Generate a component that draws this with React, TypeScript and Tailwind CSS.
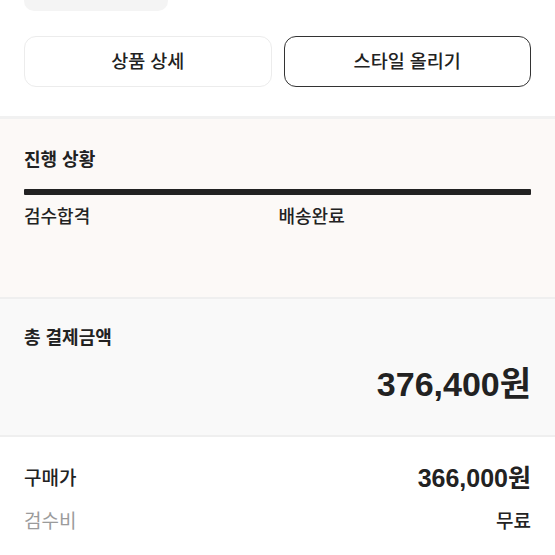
const font = { fontFamily: '"Liberation Sans", "Noto Sans CJK KR", sans-serif' };

export default function App() {
  return (
    <div className="w-[555px] h-[555px] overflow-hidden bg-white text-[#222]" style={font}>
      {/* top pill, cut off */}
      <div className="px-6">
        <div className="h-[11px] w-[144px] rounded-b-[10px] bg-[#f4f4f4]" />
      </div>

      {/* buttons */}
      <div className="grid grid-cols-2 gap-3 px-6 pt-[25px] pb-[29px]">
        <button className="h-[51px] rounded-[12px] border border-[#ececec] bg-white text-[18.5px] font-medium text-[#222]">
          상품 상세
        </button>
        <button className="h-[51px] rounded-[12px] border border-[#333] bg-white text-[18.5px] font-medium text-[#222]">
          스타일 올리기
        </button>
      </div>

      <div className="h-[3px] bg-[#f1f1f1]" />

      {/* progress */}
      <div className="h-[178px] bg-[#fcf9f7] px-6 pt-[29px]">
        <div className="text-[18px] font-bold leading-[24px]">진행 상황</div>
        <div className="mt-[17px] h-[6px] rounded-[1px] bg-[#222]" />
        <div className="mt-[10px] grid grid-cols-2 text-[18px] font-medium leading-[24px]">
          <span>검수합격</span>
          <span className="pl-[1px]">배송완료</span>
        </div>
      </div>

      <div className="h-[2px] bg-[#efefef]" />

      {/* total */}
      <div className="h-[136px] bg-[#f9f9f9] px-6 pt-[27px]">
        <div className="text-[18px] font-bold leading-[24px]">총 결제금액</div>
        <div className="mt-[14px] text-right text-[34px] font-bold leading-[40px]">376,400원</div>
      </div>

      <div className="h-[2px] bg-[#efefef]" />

      {/* breakdown */}
      <div className="px-6 pt-[29px]">
        <div className="flex items-center justify-between h-[26px]">
          <span className="text-[19px] font-medium">구매가</span>
          <span className="text-[25px] font-bold">366,000원</span>
        </div>
        <div className="mt-[17px] flex items-center justify-between h-[26px]">
          <span className="text-[19px] text-[#9b9b9b]">검수비</span>
          <span className="text-[19px] font-medium">무료</span>
        </div>
      </div>
    </div>
  );
}
